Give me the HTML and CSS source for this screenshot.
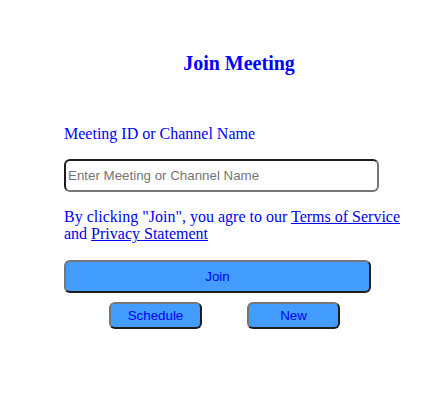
FILE: index.html
```html
<!DOCTYPE html>
<html>
<head>
<meta charset="utf-8">
<link rel="stylesheet" href="styles.css">
</head>
<body>
<div class="panel">
  <h3 class="title">Join Meeting</h3>
  <label class="label" for="mid">Meeting ID or Channel Name</label>
  <input id="mid" class="field" type="text" placeholder="Enter Meeting or Channel Name">
  <p class="terms">By clicking "Join", you agre to our <a href="#">Terms of Service</a> and <a href="#">Privacy Statement</a></p>
  <button class="btn btn-join">Join</button>
  <div class="row">
    <button class="btn btn-small">Schedule</button>
    <button class="btn btn-small">New</button>
  </div>
</div>
</body>
</html>
```
FILE: styles.css
```css
html, body {
  margin: 0;
  padding: 0;
  background: #fff;
}
body {
  font-family: "Liberation Serif", "Times New Roman", serif;
  color: #0000ff;
}
.panel {
  width: 350px;
  margin-left: 64px;
  padding-top: 52px;
  display: flex;
  flex-direction: column;
  align-items: flex-start;
}
.title {
  align-self: stretch;
  text-align: center;
  font-size: 20px;
  font-weight: bold;
  line-height: 22px;
  margin: 0 0 51px 0;
}
.label {
  font-size: 16px;
  line-height: 18px;
  display: block;
  margin: 0 0 16px 0;
}
.field {
  box-sizing: border-box;
  width: 315px;
  height: 33px;
  margin: 0;
  padding: 0 2px;
  border: 2px solid;
  border-color: #1e1e1e #767676 #767676 #1e1e1e;
  border-radius: 6px;
  font-family: "Liberation Sans", Arial, sans-serif;
  font-size: 13.33px;
  color: #000;
  background: #fff;
  outline: none;
}
.field::placeholder {
  color: #757575;
}
.terms {
  font-size: 16px;
  line-height: 17px;
  margin: 16px 0 0 0;
}
.terms a {
  color: #0000ee;
}
.btn {
  box-sizing: border-box;
  border: 2px solid;
  border-color: #767676 #1e1e1e #1e1e1e #767676;
  border-radius: 6px;
  background: #429dfe;
  color: #0000ff;
  font-family: "Liberation Sans", Arial, sans-serif;
  font-size: 13.33px;
  padding: 0;
  margin: 0;
}
.btn-join {
  width: 307px;
  height: 33px;
  margin-top: 18px;
}
.row {
  display: flex;
  gap: 45px;
  margin: 9px 0 0 45px;
}
.btn-small {
  width: 93px;
  height: 27px;
}
```
